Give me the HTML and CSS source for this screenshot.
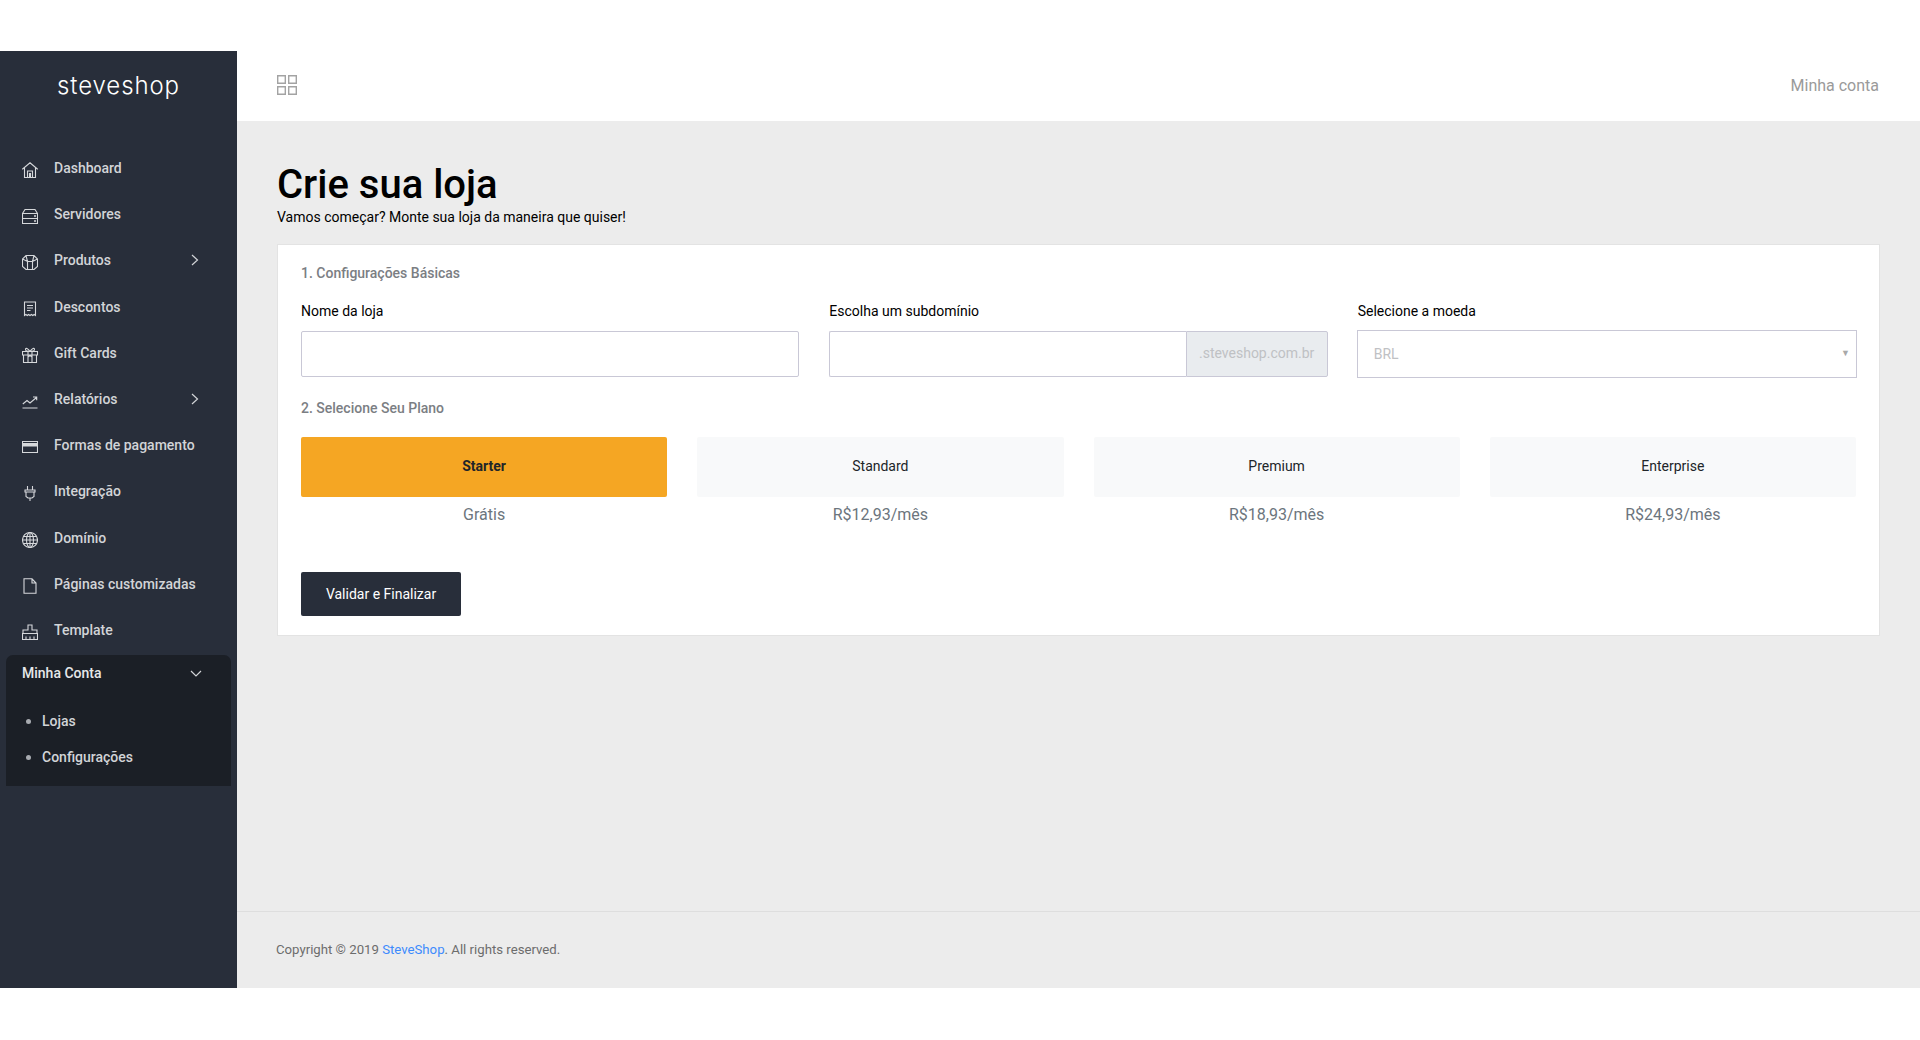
FILE: index.html
```html
<!DOCTYPE html>
<html lang="pt-BR">
<head>
  <meta charset="UTF-8">
  <title>SteveShop</title>
  <link rel="stylesheet" href="styles.css">
</head>
<body>
  <div class="app">
    <aside class="sidebar">
      <div class="logo">steveshop</div>
      <nav class="menu">
        <a class="item"><svg class="icon" viewBox="0 0 16 16"><path d="M.3 7.300 8 .8l7.700 6.500M2.500 5.800v9.700h11V5.800M5.500 15.500V9h5v6.500M7.500 15.500v-4h1v4"/></svg><span>Dashboard</span></a>
        <a class="item"><svg class="icon" viewBox="0 0 16 16"><path d="M3 1.500h10l2.500 4v10H.5v-10zM.5 5.500h15M.5 10.500h15"/><path class="dots" d="M12 7.300h2v1.400h-2zM12 12.300h2v1.400h-2z"/></svg><span>Servidores</span></a>
        <a class="item"><svg class="icon" viewBox="0 0 16 16"><path d="M4 1.500h8l3.500 3.500v7.500L12 15.500H4L.5 12.500V5zM.5 5l5 2.500h5l5-2.500M5.500 7.500v8M10.500 7.500v8M4 1.500l1.500 6M12 1.500l-1.500 6"/></svg><span>Produtos</span><svg class="chevron" viewBox="0 0 8 12"><path d="m1 1 5.500 5L1 11"/></svg></a>
        <a class="item"><svg class="icon" viewBox="0 0 16 16"><path d="M2.500 1h11v13.500l-1.400-1-1.300 1-1.400-1-1.400 1-1.400-1-1.300 1-1.400-1-1.400 1zM5 4.500h6M5 7h6M5 9.500h3.500"/></svg><span>Descontos</span></a>
        <a class="item"><svg class="icon" viewBox="0 0 16 16"><path d="M.5 4.500h15v3.500H.5zM1.500 8v7.500h13V8M6 4.500v11M10 4.500v11M8 4.500C6 1 3.500.5 3.500 2.500S6 4.500 8 4.500c2 0 4.500 0 4.500-2S10 1 8 4.500M6 10l2-1.500 2 1.500"/></svg><span>Gift Cards</span></a>
        <a class="item"><svg class="icon" viewBox="0 0 16 16"><path d="M.5 15h15M.8 11 5 7.500l3 2.500 6.500-5.500M11 4h3.700v3.200"/></svg><span>Relatórios</span><svg class="chevron" viewBox="0 0 8 12"><path d="m1 1 5.500 5L1 11"/></svg></a>
        <a class="item"><svg class="icon" viewBox="0 0 16 16"><path d="M.5 2.500h15v11H.5z"/><path class="band" d="M.5 4.500h15v2.500H.5z"/></svg><span>Formas de pagamento</span></a>
        <a class="item"><svg class="icon" viewBox="0 0 16 16"><path d="M5.500 1v4M10.500 1v4M3 5h10v2H3zM4 7v4.500L6 13h4l2-1.500V7M8 13v3"/></svg><span>Integração</span></a>
        <a class="item"><svg class="icon" viewBox="0 0 16 16"><circle cx="8" cy="8" r="7.500"/><ellipse cx="8" cy="8" rx="3.500" ry="7.500"/><path d="M8 .5v15M.5 8h15M1.500 4.500h13M1.500 11.500h13"/></svg><span>Domínio</span></a>
        <a class="item"><svg class="icon" viewBox="0 0 16 16"><path d="M2 .8h8l4 4.200v10.200H2zM10 .8V5h4"/></svg><span>Páginas customizadas</span></a>
        <a class="item"><svg class="icon" viewBox="0 0 16 16"><path d="M6 1h4v5h5v3.500H1V6h5zM.5 9.500h15v6H.5zM4 15.500v-3M8 15.500v-3M12 15.500v-3"/></svg><span>Template</span></a>
      </nav>
      <div class="account">
        <div class="account-head"><span>Minha Conta</span><svg class="chevron-down" viewBox="0 0 12 8"><path d="m1 1 5 5 5-5"/></svg></div>
        <ul class="account-list">
          <li>Lojas</li>
          <li>Configurações</li>
        </ul>
      </div>
    </aside>

    <div class="main">
      <header class="topbar">
        <svg class="grid-icon" viewBox="0 0 20 20"><path d="M.7.700h7.600v7.600H.7zM11.700.700h7.600v7.600h-7.600zM.7 11.700h7.600v7.600H.7zM11.700 11.700h7.600v7.600h-7.600z"/></svg>
        <span class="account-link">Minha conta</span>
      </header>

      <main class="content">
        <h1>Crie sua loja</h1>
        <p class="subtitle">Vamos começar? Monte sua loja da maneira que quiser!</p>

        <section class="card">
          <h2 class="step">1. Configurações Básicas</h2>
          <div class="fields">
            <div class="field">
              <label>Nome da loja</label>
              <input class="input" type="text">
            </div>
            <div class="field">
              <label>Escolha um subdomínio</label>
              <div class="input-group">
                <input class="input" type="text">
                <span class="addon">.steveshop.com.br</span>
              </div>
            </div>
            <div class="field">
              <label>Selecione a moeda</label>
              <div class="select"><span>BRL</span><i class="caret">▼</i></div>
            </div>
          </div>

          <h2 class="step step-plan">2. Selecione Seu Plano</h2>
          <div class="plans">
            <div class="plan">
              <div class="plan-box active">Starter</div>
              <div class="price">Grátis</div>
            </div>
            <div class="plan">
              <div class="plan-box">Standard</div>
              <div class="price">R$12,93/mês</div>
            </div>
            <div class="plan">
              <div class="plan-box">Premium</div>
              <div class="price">R$18,93/mês</div>
            </div>
            <div class="plan">
              <div class="plan-box">Enterprise</div>
              <div class="price">R$24,93/mês</div>
            </div>
          </div>

          <button class="submit">Validar e Finalizar</button>
        </section>
      </main>

      <footer class="footer">Copyright © 2019 <a>SteveShop</a>. All rights reserved.</footer>
    </div>
  </div>
</body>
</html>
```

FILE: styles.css
```css
* { box-sizing: border-box; }
body { margin: 0; background: #fff; font-family: Roboto, sans-serif; font-size: 14px; color: #000; }

.app { display: flex; height: 937px; margin-top: 51px; }

/* sidebar */
.sidebar { width: 237px; flex: none; background: #282e3a; padding: 0 6px; }
.logo { height: 69px; padding-top: 20px; text-align: center; font-family: Inter, sans-serif; font-size: 24px; font-weight: 300; letter-spacing: .9px; line-height: 30px; color: #fff; }
.menu { padding-top: 25px; }
.item { display: flex; align-items: center; height: 46.200px; padding-left: 16px; color: #d2d4d7; font-weight: 500; line-height: 20px; }
.item span { margin-left: 16px; }
.icon { width: 16px; height: 16px; flex: none; fill: none; stroke: #d6d8db; stroke-width: 1.100; margin-top: 4px; }
.icon .band, .icon .dots { fill: #d6d8db; stroke: none; }
.icon .band { stroke: #d6d8db; }
.chevron { width: 8px; height: 12px; margin-left: auto; margin-right: 32px; margin-top: -1px; fill: none; stroke: #d2d4d7; stroke-width: 1.200; }

.account { height: 131px; margin-top: 2px; background: #1b1f26; border-radius: 7px 7px 0 0; color: #d2d4d7; font-weight: 500; }
.account-head { display: flex; align-items: center; justify-content: space-between; padding: 0 29px 0 16px; height: 36px; color: #e6e8ea; }
.chevron-down { width: 12px; height: 8px; margin-top: 2px; fill: none; stroke: #d2d4d7; stroke-width: 1.200; }
.account-list { list-style: none; margin: 0; padding: 12px 0 0 36px; }
.account-list li { position: relative; height: 36px; line-height: 36px; }
.account-list li::before { content: ""; position: absolute; left: -16px; top: 16px; width: 5px; height: 5px; border-radius: 50%; background: #a8abb0; }

/* main column */
.main { flex: 1; display: flex; flex-direction: column; background: #ececec; }
.topbar { height: 70px; flex: none; background: #fff; display: flex; align-items: center; justify-content: space-between; padding: 0 41px 0 40px; }
.grid-icon { width: 20px; height: 20px; fill: none; stroke: #a3a3a3; stroke-width: 1.400; margin-top: -3px; }
.account-link { font-size: 16px; color: #9a9a9a; margin-top: -1px; }

.content { flex: 1; padding: 41px 40px 0; }
h1 { margin: 0; font-size: 40px; font-weight: 500; line-height: 46px; }
.subtitle { margin: -1px 0 0; line-height: 20px; }

/* form card */
.card { height: 392px; margin-top: 17px; padding: 18px 23px; background: #fff; border: 1px solid #e3e3e3; }
.step { margin: 0; font-size: 14px; font-weight: 500; line-height: 20px; color: #7b7e83; }
.fields { display: grid; grid-template-columns: repeat(3, 1fr); column-gap: 30px; margin-top: 18px; }
.field label { display: block; line-height: 20px; height: 30px; }
.input { display: block; width: 100%; height: 46px; padding: 0 12px; border: 1px solid #c9c8d6; border-radius: 2px; background: #fff; outline: none; }
.input-group { display: flex; }
.input-group .input { flex: 1; min-width: 0; border-radius: 2px 0 0 2px; border-right: 0; }
.addon { width: 142px; flex: none; height: 46px; line-height: 43px; text-align: center; background: #e9ecef; border: 1px solid #c9c8d6; border-radius: 0 2px 2px 0; color: #bfc1c4; }
.select { display: flex; align-items: center; justify-content: space-between; height: 48px; margin: -1px -1px -1px -1px; padding: 0 6px 0 16px; border: 1px solid #c9c8d6; color: #bfc1c4; }
.caret { font-style: normal; font-size: 9px; color: #a9a9a9; margin-top: -3px; }

.step-plan { margin-top: 21px; }
.plans { display: grid; grid-template-columns: repeat(4, 1fr); column-gap: 30px; margin-top: 19px; }
.plan-box { height: 60px; line-height: 58px; text-align: center; border-radius: 2px; background: #f8f9fa; color: #212529; }
.plan-box.active { background: #f5a623; font-weight: 700; }
.price { margin-top: 8px; text-align: center; font-size: 16px; line-height: 20px; color: #6c757d; }

.submit { display: block; width: 160px; height: 44px; margin-top: 47px; padding-bottom: 2px; border: 0; border-radius: 2px; background: #282e3a; color: #fff; font-family: Roboto, sans-serif; font-size: 14px; font-weight: 400; }

.footer { height: 77px; flex: none; padding-left: 39px; border-top: 1px solid #dedede; font-size: 13.200px; line-height: 76px; color: #6c6c6c; }
.footer a { color: #3d8bfd; }
```
